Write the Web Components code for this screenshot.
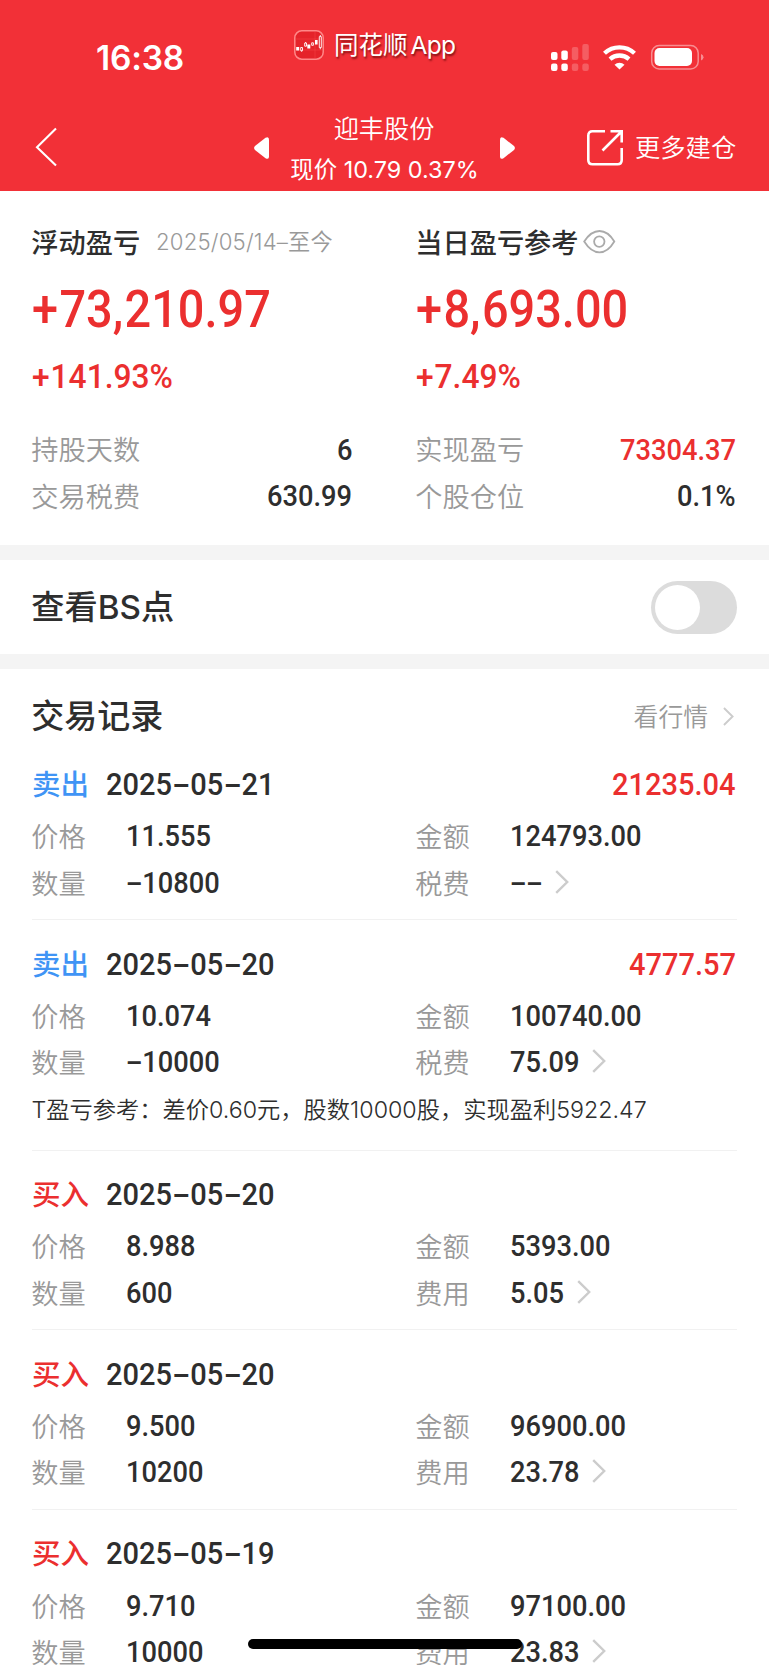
<!DOCTYPE html>
<html lang="zh-CN">
<head>
<meta charset="utf-8">
<title>迎丰股份</title>
<style>
html,body{margin:0;padding:0}
body{background:#fff;height:1665px;overflow:hidden;position:relative;font-family:"Noto Sans CJK SC",sans-serif;color:#2e2e2e}
</style>
</head>
<body>
<app-page></app-page>
<script>
const define = (name, html, setup, observed = []) => {
  const tpl = document.createElement('template');
  tpl.innerHTML = html;
  customElements.define(name, class extends HTMLElement {
    static get observedAttributes() { return observed; }
    constructor() {
      super();
      this.attachShadow({mode: 'open'}).append(tpl.content.cloneNode(true));
    }
    connectedCallback() { if (setup) setup(this, this.shadowRoot); }
    attributeChangedCallback() { if (this.isConnected && setup) setup(this, this.shadowRoot); }
  });
};

/* Numerals: condensed figures with wide dashes. The host takes the condensed width. */
define('din-num', `
<style>
:host{display:block;white-space:nowrap;font:500 30px/40px Roboto,sans-serif;--sx:.908;--dash:.6em}
:host([size="date"]){font-size:31.7px;--sx:.916;--dash:.63em}
:host([size="big"]){font-size:51px;line-height:60px;--sx:.919}
:host([size="mid"]){font-size:33.4px;--sx:.95}
#v{display:inline-block;transform:scaleX(var(--sx));transform-origin:0 50%}
.dash{display:inline-block;width:var(--dash);text-align:center}
.dash i{display:inline-block;font-style:normal;transform:scaleX(1.85)}
.comma{margin-right:.03em}
.plus{margin-right:.03em}
</style><span id="v"></span>`, (el, root) => {
  const value = el.getAttribute('value');
  if (value === null) return;
  const v = root.getElementById('v');
  v.innerHTML = value
    .replace(/[+]/g, '<span class="plus">+</span>')
    .replace(/,/g, '<span class="comma">,</span>')
    .replace(/-/g, '<span class="dash"><i>-</i></span>');
  const sx = parseFloat(getComputedStyle(el).getPropertyValue('--sx'));
  el.style.width = v.offsetWidth * sx + 'px';
}, ['value']);

define('cjk-text', `
<style>
:host{display:inline-block;white-space:nowrap;font:400 27.2px/40px "Noto Sans CJK SC",sans-serif;margin-left:-.7px;position:relative;top:-1.5px}
:host([tone="label"]){font-weight:350;color:#999}
:host([tone="title"]){font-weight:500}
:host([tone="head"]){font-weight:500;font-size:33px}
</style><slot></slot>`);

define('chevron-right', `
<style>:host{display:block;width:14px;height:24px}svg{display:block;width:100%;height:100%}
:host([small]){width:11px;height:19px}</style>
<svg viewBox="0 0 14 24"><path d="M1.2 1.2 12.2 12 1.2 22.8" fill="none" stroke="#ccc" stroke-width="2.4"/></svg>`);

define('status-bar', `
<style>
:host{display:grid;grid-template-columns:294px 257px 1fr;height:104px;color:#fff}
.time{font:600 33.5px/40px Inter,sans-serif;letter-spacing:-.2px;padding:38px 0 0 96px}
.app{display:flex;gap:10px;padding-top:29.5px;height:30px;align-items:center;font:400 24.5px/30px Inter,"Noto Sans CJK SC",sans-serif;text-shadow:1px 2px 2px rgba(70,0,0,.65);white-space:nowrap}
.app svg{flex:none}
.app>span{margin-top:1px}
.icons{padding-top:43px}
.icons svg{display:block}
</style>
<div class="time">16:38</div>
<div class="app">
<svg width="30" height="30" viewBox="0 0 30 30"><rect x=".8" y=".8" width="28.4" height="28.4" rx="7" fill="#e5232a" stroke="#f88" stroke-width="1.5"/><g stroke="#f4454a" stroke-width=".5"><path d="M1.500 9h27M1.500 20h27M21 2v26"/></g><g fill="#fff"><path d="M2.200 17h3v3.500h-3zM13.300 14.500h3v4h-3zM21 10h2.600v4.500H21z"/></g><g fill="none" stroke="#fff" stroke-width=".9"><path d="M6.700 17.500h1.800v3.200H6.700zM10.700 13h1.800v3.200h-1.800zM17.700 12.800h1.700v2.500h-1.700zM25.300 6.600h2v11h-2zM7.600 20.700v1M11.600 12v1M26.300 5v1.600M26.300 17.600v1.700"/></g></svg>
<span>同花顺 <span style="letter-spacing:-.6px;margin-left:-4px">App</span></span></div>
<div class="icons"><svg width="160" height="30" viewBox="0 0 160 30">
<g fill="#fff"><rect x="0" y="9" width="6.500" height="8" rx="2"/><rect x="10.300" y="7.500" width="6.500" height="9.500" rx="2"/><rect x="0" y="20.500" width="6.500" height="7.500" rx="2.200"/><rect x="10.300" y="20.500" width="6.500" height="7.500" rx="2.200"/></g>
<g fill="#fff" fill-opacity=".22"><rect x="20.800" y="4" width="6.500" height="13" rx="2"/><rect x="31.300" y="1" width="6.500" height="16" rx="2"/><rect x="20.800" y="20.500" width="6.500" height="7.500" rx="2.200"/><rect x="31.300" y="20.500" width="6.500" height="7.500" rx="2.200"/></g>
<g transform="translate(52 1.500)" fill="none" stroke="#fff" stroke-width="4.300"><path d="M1.500 8.700a22 22 0 0 1 30 0"/><path d="M7 14.600a14.300 14.300 0 0 1 19 0"/><path d="M11.500 20.200a7.600 7.600 0 0 1 10 0L16.500 25z" fill="#fff" stroke="none"/></g>
<rect x="100.700" y="2.500" width="46.500" height="23.500" rx="7.500" fill="none" stroke="#fff" stroke-opacity=".45" stroke-width="1.500"/><rect x="103.500" y="5" width="37.500" height="18" rx="5" fill="#fff"/><path d="M150 11v6.500q2.500-1 2.500-3.250T150 11z" fill="#fff" fill-opacity=".45"/>
</svg></div>`);

define('nav-bar', `
<style>
:host{display:grid;grid-template-columns:254px 261px 1fr;height:87px;color:#fff}
.back{padding:23px 0 0 35px}
svg{display:block}
.mid{display:flex;justify-content:space-between;padding-top:33px;align-items:flex-start}
.t{display:flex;flex-direction:column;align-items:center;margin-top:-28px;white-space:nowrap}
.name{font:350 25.2px/36px "Noto Sans CJK SC",sans-serif;margin-left:-1px}
.sub{font:400 23.4px/30px Inter,"Noto Sans CJK SC",sans-serif;margin-top:10px}
.more{display:flex;align-items:center;gap:12px;height:40px;padding:23px 0 0 71px;font:350 25.3px/40px "Noto Sans CJK SC",sans-serif;white-space:nowrap}
.more span{margin-top:-2px}
</style>
<div class="back"><svg width="22" height="40" viewBox="0 0 22 40"><path d="M21 1.500 2 20.300 21 38.500" fill="none" stroke="#fff" stroke-width="2.100"/></svg></div>
<div class="mid"><svg width="15" height="22" viewBox="0 0 15 22"><path d="M11.500.8Q15-1.200 15 2.800V19.200Q15 23.200 11.500 21.200L1 13Q-.8 11 1 9z" fill="#fff"/></svg>
<div class="t"><div class="name">迎丰股份</div><div class="sub">现价 10.79 0.37%</div></div>
<svg width="15" height="22" viewBox="0 0 15 22"><path d="M3.500.8Q0-1.200 0 2.800V19.200Q0 23.200 3.500 21.200L14 13Q15.800 11 14 9z" fill="#fff"/></svg></div>
<div class="more"><svg width="37" height="37" viewBox="0 0 37 37"><g fill="none" stroke="#fff" stroke-width="2.600"><path d="M19 2.300H6.500Q2.300 2.300 2.300 6.500V31Q2.300 35.200 6.500 35.200H31.500Q35.700 35.200 35.700 31V19"/><path d="M24.500 2.300H35.700V13.500M35 3 16.500 21.500"/></g></svg><span>更多建仓</span></div>`);

define('stat-row', `
<style>:host{display:flex;justify-content:space-between;height:46.4px;align-items:center}</style>
<cjk-text tone="label"><slot></slot></cjk-text><din-num></din-num>`, (el, root) => {
  root.querySelector('din-num').setAttribute('value', el.getAttribute('value'));
});

define('profit-card', `
<style>
:host{display:block;width:320px;color:#2e2e2e}
.head{display:flex;height:40px;align-items:center;white-space:nowrap}
.big{height:60px;margin-top:18px;color:#eb2f2f}
.pct{height:40px;margin:17px 0 29.500px;color:#eb2f2f}
</style>
<div class="head"><cjk-text tone="title"><slot name="title"></slot></cjk-text><slot name="extra"></slot></div>
<div class="big"><din-num size="big"></din-num></div>
<div class="pct"><din-num size="mid"></din-num></div>
<slot></slot>`, (el, root) => {
  root.querySelector('[size=big]').setAttribute('value', el.getAttribute('amount'));
  root.querySelector('[size=mid]').setAttribute('value', el.getAttribute('percent'));
});

define('toggle-switch', `
<style>:host{display:block;box-sizing:border-box;width:86px;height:53px;border-radius:27px;background:#dcdcdc;padding:4px}
i{display:block;width:45px;height:45px;border-radius:50%;background:#fff}</style><i></i>`);

define('record-field', `
<style>
:host{display:grid;grid-template-columns:93.5px auto 1fr;height:46.5px;align-items:center}
din-num{margin-top:-1px}
chevron-right{margin:0 0 3px 13px}
</style>
<cjk-text tone="label"><slot></slot></cjk-text><din-num></din-num>`, (el, root) => {
  root.querySelector('din-num').setAttribute('value', el.getAttribute('value'));
  if (el.hasAttribute('link')) root.append(document.createElement('chevron-right'));
});

define('trade-record', `
<style>
:host{display:block;box-sizing:border-box;height:179.7px;margin:0 32px;padding-top:24.5px;border-bottom:1px solid #f1f1f1}
:host([note]){height:230.5px}
:host([first]){height:157.500px;padding-top:2.500px}
.top{display:flex;height:40px;align-items:center}
.side{color:#eb2f2f;font:500 28.5px/40px "Noto Sans CJK SC",sans-serif;position:relative;top:-2px;width:74px}
:host([sell]) .side{color:#3f94f5}
.gain{margin:0 1px 0 auto;color:#eb2f2f}
.grid{display:grid;grid-template-columns:384px 1fr;padding-top:8.500px}
.note{font:350 23.25px/34px Inter,"Noto Sans CJK SC",sans-serif;margin:7px 0 0 -.5px;white-space:nowrap}
</style>
<div class="top"><span class="side"></span><din-num class="date" size="date"></din-num></div>
<div class="grid"></div>`, (el, root) => {
  const a = k => el.getAttribute(k);
  root.querySelector('.side').textContent = el.hasAttribute('sell') ? '卖出' : '买入';
  root.querySelector('.date').setAttribute('value', a('date'));
  if (a('gain')) {
    root.querySelector('.top').insertAdjacentHTML('beforeend', `<din-num class="gain" size="date" value="${a('gain')}"></din-num>`);
  }
  root.querySelector('.grid').innerHTML =
    `<record-field value="${a('price')}">价格</record-field><record-field value="${a('amount')}">金额</record-field>` +
    `<record-field value="${a('qty')}">数量</record-field><record-field link value="${a('fee')}">${el.hasAttribute('sell') ? '税费' : '费用'}</record-field>`;
  if (a('note')) {
    const n = document.createElement('div');
    n.className = 'note';
    n.textContent = a('note');
    root.append(n);
  }
});

define('home-indicator', `<style>:host{position:absolute;left:247.5px;top:1639px;width:274px;height:10px;border-radius:5px;background:#000}</style>`);

define('app-page', `
<style>
:host{display:block;height:1665px;overflow:hidden}
header{background:#f23037;height:191px}
.summary{display:flex;gap:64px;height:354px;padding:31px 32px 0;box-sizing:border-box}
.band{height:15px;background:#f4f4f4}
.bs{display:flex;align-items:center;justify-content:space-between;height:94px;padding:0 32px}
.bs cjk-text{font-family:Inter,"Noto Sans CJK SC",sans-serif;font-size:33.2px;top:-.5px}
.list{display:flex;align-items:center;justify-content:space-between;height:93.500px;padding:0 35px 0 32px}
.quote{display:flex;align-items:center;gap:15px;color:#999;margin-top:1px}
.quote cjk-text{font-size:24.800px;color:#999}
.period{font:350 22.2px/40px Inter,"Noto Sans CJK SC",sans-serif;color:#999;margin-left:16px;letter-spacing:.16px}
.eye{display:block;margin-left:4.500px}
.red{color:#eb2f2f}
</style>
<header><status-bar></status-bar><nav-bar></nav-bar></header>
<section class="summary">
<profit-card amount="+73,210.97" percent="+141.93%"><span slot="title">浮动盈亏</span><span slot="extra" class="period">2025/05/14–至今</span>
<stat-row value="6">持股天数</stat-row><stat-row value="630.99">交易税费</stat-row></profit-card>
<profit-card amount="+8,693.00" percent="+7.49%"><span slot="title">当日盈亏参考</span>
<svg slot="extra" class="eye" width="33" height="24" viewBox="0 0 33 24"><g fill="none" stroke="#aaa" stroke-width="1.800"><path d="M1.200 11.500Q8 1 16.500 1T31.300 11.500Q25 22.300 16.500 22.300T1.200 11.500z"/><circle cx="16.300" cy="11.600" r="5.200"/></g></svg>
<stat-row class="red" value="73304.37">实现盈亏</stat-row><stat-row value="0.1%">个股仓位</stat-row></profit-card>
</section>
<div class="band"></div>
<section class="bs"><cjk-text tone="head">查看BS点</cjk-text><toggle-switch></toggle-switch></section>
<div class="band"></div>
<section class="list"><cjk-text tone="head">交易记录</cjk-text><div class="quote"><cjk-text tone="label">看行情</cjk-text><chevron-right small></chevron-right></div></section>
<trade-record first sell date="2025-05-21" gain="21235.04" price="11.555" amount="124793.00" qty="-10800" fee="--"></trade-record>
<trade-record sell date="2025-05-20" gain="4777.57" price="10.074" amount="100740.00" qty="-10000" fee="75.09" note="T盈亏参考：差价0.60元，股数10000股，实现盈利5922.47"></trade-record>
<trade-record date="2025-05-20" price="8.988" amount="5393.00" qty="600" fee="5.05"></trade-record>
<trade-record date="2025-05-20" price="9.500" amount="96900.00" qty="10200" fee="23.78"></trade-record>
<trade-record date="2025-05-19" price="9.710" amount="97100.00" qty="10000" fee="23.83"></trade-record>
<home-indicator></home-indicator>`);
</script>
</body>
</html>
